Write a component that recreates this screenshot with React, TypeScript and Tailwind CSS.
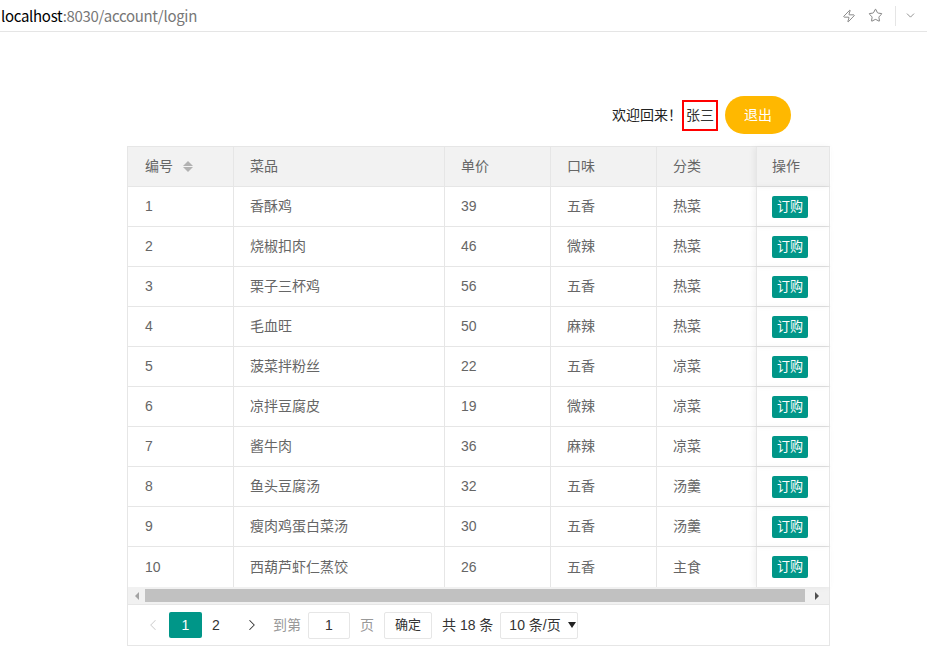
import { Star, Zap, ChevronDown, ChevronLeft, ChevronRight } from "lucide-react";

const rows = [
  ["1", "香酥鸡", "39", "五香", "热菜"],
  ["2", "烧椒扣肉", "46", "微辣", "热菜"],
  ["3", "栗子三杯鸡", "56", "五香", "热菜"],
  ["4", "毛血旺", "50", "麻辣", "热菜"],
  ["5", "菠菜拌粉丝", "22", "五香", "凉菜"],
  ["6", "凉拌豆腐皮", "19", "微辣", "凉菜"],
  ["7", "酱牛肉", "36", "麻辣", "凉菜"],
  ["8", "鱼头豆腐汤", "32", "五香", "汤羹"],
  ["9", "瘦肉鸡蛋白菜汤", "30", "五香", "汤羹"],
  ["10", "西葫芦虾仁蒸饺", "26", "五香", "主食"],
];

const cols = "grid grid-cols-[106px_211px_106px_106px_99px_75px]";

export default function App() {
  return (
    <div className="w-[927px] h-[661px] bg-white text-[#666] font-['Liberation_Sans','Noto_Sans_CJK_SC',sans-serif] text-[14px] overflow-hidden">
      {/* address bar */}
      <div className="h-[32px] border-b border-[#e5e5e5] flex items-center pl-[1px] pr-[10px]">
        <div className="text-[15px] tracking-[-0.3px] font-['Noto_Sans_CJK_SC',sans-serif] leading-none">
          <span className="text-black">localhost</span>
          <span className="text-[#777]">:8030/account/login</span>
        </div>
        <div className="ml-auto flex items-center text-[#666]">
          <Zap size={14} strokeWidth={1.3} />
          <Star size={15} strokeWidth={1.3} className="ml-[12px]" />
          <div className="w-px h-[20px] bg-[#e5e5e5] ml-[12px]" />
          <ChevronDown size={13} strokeWidth={1.3} className="ml-[8px]" />
        </div>
      </div>

      <div className="ml-[127px] w-[703px]">
        {/* welcome */}
        <div className="flex items-center justify-end pr-[39px] mt-[64px] h-[38px]">
          <span className="text-[#222] text-[14px]">欢迎回来！</span>
          <span className="border-2 border-[#ff0000] text-[#333] px-[2px] h-[31px] flex items-center">张三</span>
          <button className="ml-[7px] w-[66px] h-[38px] rounded-full bg-[#FFB800] text-white text-[14px]">退出</button>
        </div>

        {/* table */}
        <div className="mt-[12px] border border-[#e6e6e6]">
          <div>
            <div className={`${cols} h-[40px] bg-[#f2f2f2] border-b border-[#e6e6e6]`}>
              <div className="flex items-center pl-[17px] border-r border-[#e6e6e6]">
                编号
                <span className="ml-[10px] flex flex-col gap-[1px]">
                  <span className="w-0 h-0 border-x-[5px] border-x-transparent border-b-[5px] border-b-[#b2b2b2]" />
                  <span className="w-0 h-0 border-x-[5px] border-x-transparent border-t-[5px] border-t-[#b2b2b2]" />
                </span>
              </div>
              <div className="flex items-center pl-[16px] border-r border-[#e6e6e6]">菜品</div>
              <div className="flex items-center pl-[16px] border-r border-[#e6e6e6]">单价</div>
              <div className="flex items-center pl-[16px] border-r border-[#e6e6e6]">口味</div>
              <div className="flex items-center pl-[16px]">分类</div>
              <div className="flex items-center pl-[15px] border-l border-[#e6e6e6] shadow-[-2px_0_6px_rgba(0,0,0,0.06)]">操作</div>
            </div>
            {rows.map((r) => (
              <div key={r[0]} className={`${cols} h-[40px] border-b border-[#e6e6e6] last:border-b-0`}>
                <div className="flex items-center pl-[17px] border-r border-[#e6e6e6]">{r[0]}</div>
                <div className="flex items-center pl-[16px] border-r border-[#e6e6e6]">{r[1]}</div>
                <div className="flex items-center pl-[16px] border-r border-[#e6e6e6]">{r[2]}</div>
                <div className="flex items-center pl-[16px] border-r border-[#e6e6e6]">{r[3]}</div>
                <div className="flex items-center pl-[16px]">{r[4]}</div>
                <div className="flex items-center pl-[15px] border-l border-[#e6e6e6] shadow-[-2px_0_6px_rgba(0,0,0,0.06)]">
                  <span className="w-[36px] h-[22px] bg-[#009688] text-white text-[13px] rounded-[2px] flex items-center justify-center">订购</span>
                </div>
              </div>
            ))}
          </div>

          {/* scrollbar */}
          <div className="h-[17px] bg-[#f1f1f1] flex items-center">
            <div className="w-[17px] flex justify-center">
              <span className="w-0 h-0 border-y-[4px] border-y-transparent border-r-[4px] border-r-[#a3a3a3]" />
            </div>
            <div className="w-[660px] h-[13px] bg-[#c1c1c1]" />
            <div className="flex-1 flex justify-center">
              <span className="w-0 h-0 border-y-[4px] border-y-transparent border-l-[4px] border-l-[#505050]" />
            </div>
          </div>

          {/* pager */}
          <div className="h-[41px] border-t border-[#e6e6e6] flex items-center pl-[16px] text-[#333]">
            <ChevronLeft size={18} strokeWidth={1.4} className="text-[#d2d2d2]" />
            <span className="ml-[7px] w-[33px] h-[26px] bg-[#009688] text-white rounded-[2px] flex items-center justify-center">1</span>
            <span className="w-[28px] text-center">2</span>
            <ChevronRight size={18} strokeWidth={1.4} className="ml-[13px] text-[#333]" />
            <span className="ml-[12px] text-[#999]">到第</span>
            <span className="ml-[7px] w-[42px] h-[27px] border border-[#e6e6e6] rounded-[2px] flex items-center justify-center">1</span>
            <span className="ml-[10px] text-[#999]">页</span>
            <span className="ml-[10px] w-[48px] h-[27px] border border-[#e6e6e6] rounded-[2px] flex items-center justify-center text-[13px]">确定</span>
            <span className="ml-[10px] text-[#333]">共 18 条</span>
            <span className="ml-[7px] w-[78px] h-[27px] border border-[#e6e6e6] rounded-[2px] flex items-center pl-[8px] text-[#333]">
              10 条/页
              <span className="ml-[7px] w-0 h-0 border-x-[4px] border-x-transparent border-t-[6px] border-t-[#222]" />
            </span>
          </div>
        </div>
      </div>
    </div>
  );
}
